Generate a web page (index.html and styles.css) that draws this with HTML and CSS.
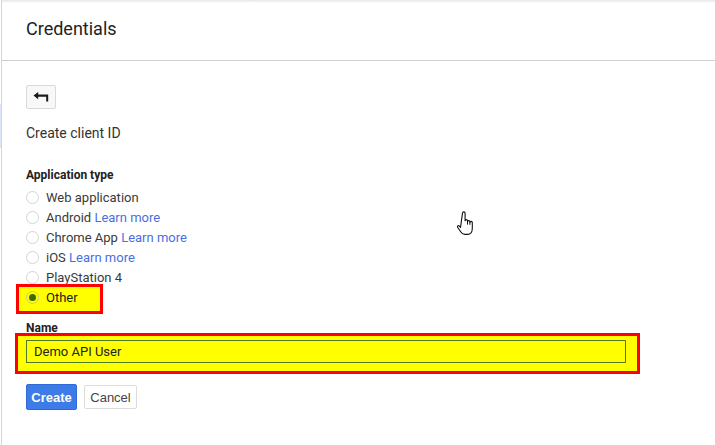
FILE: index.html
```html
<!DOCTYPE html>
<html lang="en">
  <head>
    <meta charset="UTF-8" />
    <meta name="viewport" content="width=device-width, initial-scale=1.0" />
    <title>Credentials</title>

    <link rel="stylesheet" href="styles.css">
  </head>
  <body>
    <div class="page">
      <div class="rail"><span class="rail-mark"></span></div>

      <main class="panel">
        <header class="page-head">
          <h1>Credentials</h1>
        </header>

        <section class="content">
          <button class="back" type="button" title="Back">
            <svg width="16" height="10" viewBox="0 0 16 10">
              <path d="M0.5 3.6 L5.2 0 V2.5 H15.2 V9.5 H13.2 V4.7 H5.2 V7.2 Z" fill="#1a1a1a" />
            </svg>
          </button>

          <h2>Create client ID</h2>

          <form class="client-form">
            <div class="field-label">Application type</div>

            <div class="radios">
              <label class="radio"><span class="dot"></span><span>Web application</span></label>
              <label class="radio"><span class="dot"></span><span>Android <a href="#">Learn more</a></span></label>
              <label class="radio"><span class="dot"></span><span>Chrome App <a href="#">Learn more</a></span></label>
              <label class="radio"><span class="dot"></span><span>iOS <a href="#">Learn more</a></span></label>
              <label class="radio"><span class="dot"></span><span>PlayStation 4</span></label>
              <div class="mark mark-other">
                <label class="radio checked"><span class="dot"></span><span>Other</span></label>
              </div>
            </div>

            <div class="field-label name-label">Name</div>
            <div class="mark mark-name">
              <input class="name-input" type="text" value="Demo API User" />
            </div>

            <div class="actions">
              <button class="btn primary" type="button">Create</button>
              <button class="btn" type="button">Cancel</button>
            </div>
          </form>
        </section>
      </main>

      <!-- mouse pointer resting over the form -->
      <svg class="pointer" width="18" height="26" viewBox="0 0 18 26">
        <path
          d="M5.5 2.2 a1.3 1.3 0 0 1 2.6 0 v7.6 a1.2 1.2 0 0 1 2.4 0 v1 a1.2 1.2 0 0 1 2.4 0 v0.8 a1.2 1.2 0 0 1 2.4 0 v5.6 c0 3.4 -1.6 6.2 -4.8 6.2 h-2.6 c-2 0 -3.2 -1 -4.2 -2.6 l-3.1 -4.6 c-0.6 -1 0.6 -2.1 1.5 -1.3 l1.4 1.4 z"
          fill="#fff"
          stroke="#111"
          stroke-width="1.1"
          stroke-linejoin="round"
        />
        <path d="M10.5 10.6 v3 M12.9 11.4 v2.4" stroke="#111" stroke-width="1" fill="none" />
      </svg>
    </div>
  </body>
</html>
```

FILE: styles.css
```css
*,
*::before,
*::after {
  box-sizing: border-box;
  margin: 0;
  padding: 0;
}
body {
  font-family: Roboto, "Liberation Sans", Arial, sans-serif;
  color: #333;
  background: #fff;
  width: 715px;
  height: 445px;
  overflow: hidden;
}

.page {
  position: relative;
  display: flex;
  height: 445px;
}

/* thin left rail with the selected nav hint */
.rail {
  width: 2px;
  flex-shrink: 0;
  border-right: 1px solid #d6d6d6;
  padding-top: 104px;
}
.rail-mark {
  display: block;
  width: 1px;
  height: 44px;
  background: #dbe6f8;
}

.panel {
  flex: 1;
  display: flex;
  flex-direction: column;
  background: linear-gradient(#e6e6e6, #fff 3px);
}

.page-head {
  height: 61px;
  border-bottom: 1px solid #cfcfcf;
  padding: 17px 0 0 24px;
}
h1 {
  font-size: 18px;
  font-weight: 400;
  color: #222;
  line-height: 24px;
}

.content {
  padding: 24px 0 0 24px;
  display: flex;
  flex-direction: column;
  align-items: flex-start;
}

.back {
  width: 30px;
  height: 24px;
  border: 1px solid #d9d9d9;
  border-radius: 2px;
  background: #f8f8f8;
  display: flex;
  align-items: center;
  justify-content: center;
}

h2 {
  margin-top: 16px;
  font-size: 14px;
  font-weight: 400;
  color: #333;
  line-height: 16px;
}

.client-form {
  display: flex;
  flex-direction: column;
  align-items: flex-start;
  margin-top: 27px;
}

.field-label {
  font-size: 12px;
  font-weight: 700;
  line-height: 14px;
  color: #222;
}

.radios {
  margin-top: 5px;
  display: flex;
  flex-direction: column;
}
.radio {
  display: flex;
  align-items: center;
  height: 20px;
  font-size: 13px;
  color: #3a3a3a;
  gap: 7px;
}
.radio a {
  color: #4a6fdf;
  text-decoration: none;
}
.dot {
  width: 13px;
  height: 13px;
  border-radius: 50%;
  border: 1px solid #d4d4d4;
  background: #fff;
  flex-shrink: 0;
}
.radio.checked .dot {
  background: transparent;
  border-color: #c9c98a;
  display: flex;
  align-items: center;
  justify-content: center;
}
.radio.checked .dot::after {
  content: "";
  width: 7px;
  height: 7px;
  border-radius: 50%;
  background: #3f6b00;
}

/* highlighter boxes */
.mark {
  background: #ffff00;
  border: 3px solid #ff0000;
}
.mark-other {
  width: 87px;
  margin: -3px 0 0 -10px;
  padding: 0 0 4px 7px;
}
.mark-other .radio {
  color: #222;
}

.name-label {
  margin-top: 7px;
}
.mark-name {
  width: 625px;
  margin: -2px 0 0 -11px;
  padding: 4px 11px 8px 8px;
}
.name-input {
  width: 100%;
  height: 23px;
  border: 1px solid #4f7a21;
  background: #ffff00;
  font-family: Roboto, "Liberation Sans", Arial, sans-serif;
  font-size: 13px;
  color: #222;
  padding: 0 7px;
  outline: none;
}

.actions {
  display: flex;
  align-items: center;
  gap: 7px;
  margin-top: 10px;
}
.btn {
  height: 24px;
  width: 53px;
  border: 1px solid #dcdcdc;
  border-radius: 2px;
  background: #fff;
  color: #444;
  font-family: "Liberation Sans", Arial, sans-serif;
  font-size: 13px;
}
.btn.primary {
  width: 51px;
  height: 26px;
  background: #3d7be6;
  border-color: #2f6bd6;
  color: #fff;
  font-weight: 700;
}

.pointer {
  position: absolute;
  left: 457px;
  top: 211px;
}
```
